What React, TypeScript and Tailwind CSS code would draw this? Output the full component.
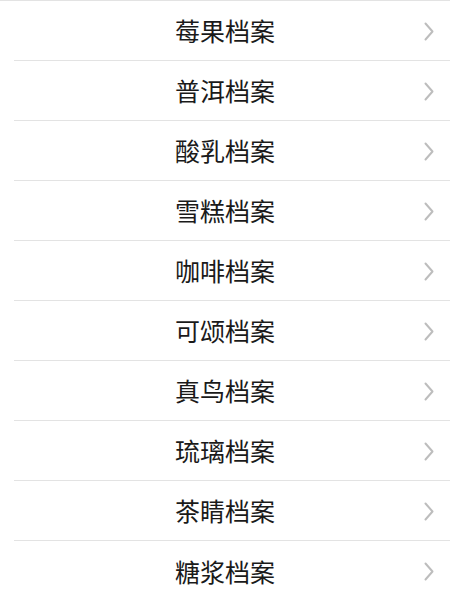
const items = [
  "莓果档案",
  "普洱档案",
  "酸乳档案",
  "雪糕档案",
  "咖啡档案",
  "可颂档案",
  "真鸟档案",
  "琉璃档案",
  "茶睛档案",
  "糖浆档案",
];

export default function App() {
  return (
    <div className="w-[450px] h-[596px] overflow-hidden bg-white border-t border-[#e3e3e3] font-['Noto_Sans_CJK_SC',sans-serif]">
      {items.map((name, i) => (
        <Row key={name} name={name} last={i === items.length - 1} />
      ))}
    </div>
  );
}

function Row({ name, last }: { name: string; last: boolean }) {
  return (
    <div className="pl-[14px]">
      <div
        className={
          "relative flex h-[60px] items-center justify-center " +
          (last ? "" : "border-b border-[#e3e3e3]")
        }
      >
        <span className="-ml-[14px] text-[25px] leading-none text-[#1a1a1a]">
          {name}
        </span>
        <svg
          className="absolute right-[16px] top-[21px]"
          width="10"
          height="19"
          viewBox="0 0 10 19"
          fill="none"
        >
          <path
            d="M1.5 1.5 L8.5 9.5 L1.5 17.5"
            stroke="#bdbdbd"
            strokeWidth="2"
            strokeLinecap="round"
            strokeLinejoin="round"
          />
        </svg>
      </div>
    </div>
  );
}
